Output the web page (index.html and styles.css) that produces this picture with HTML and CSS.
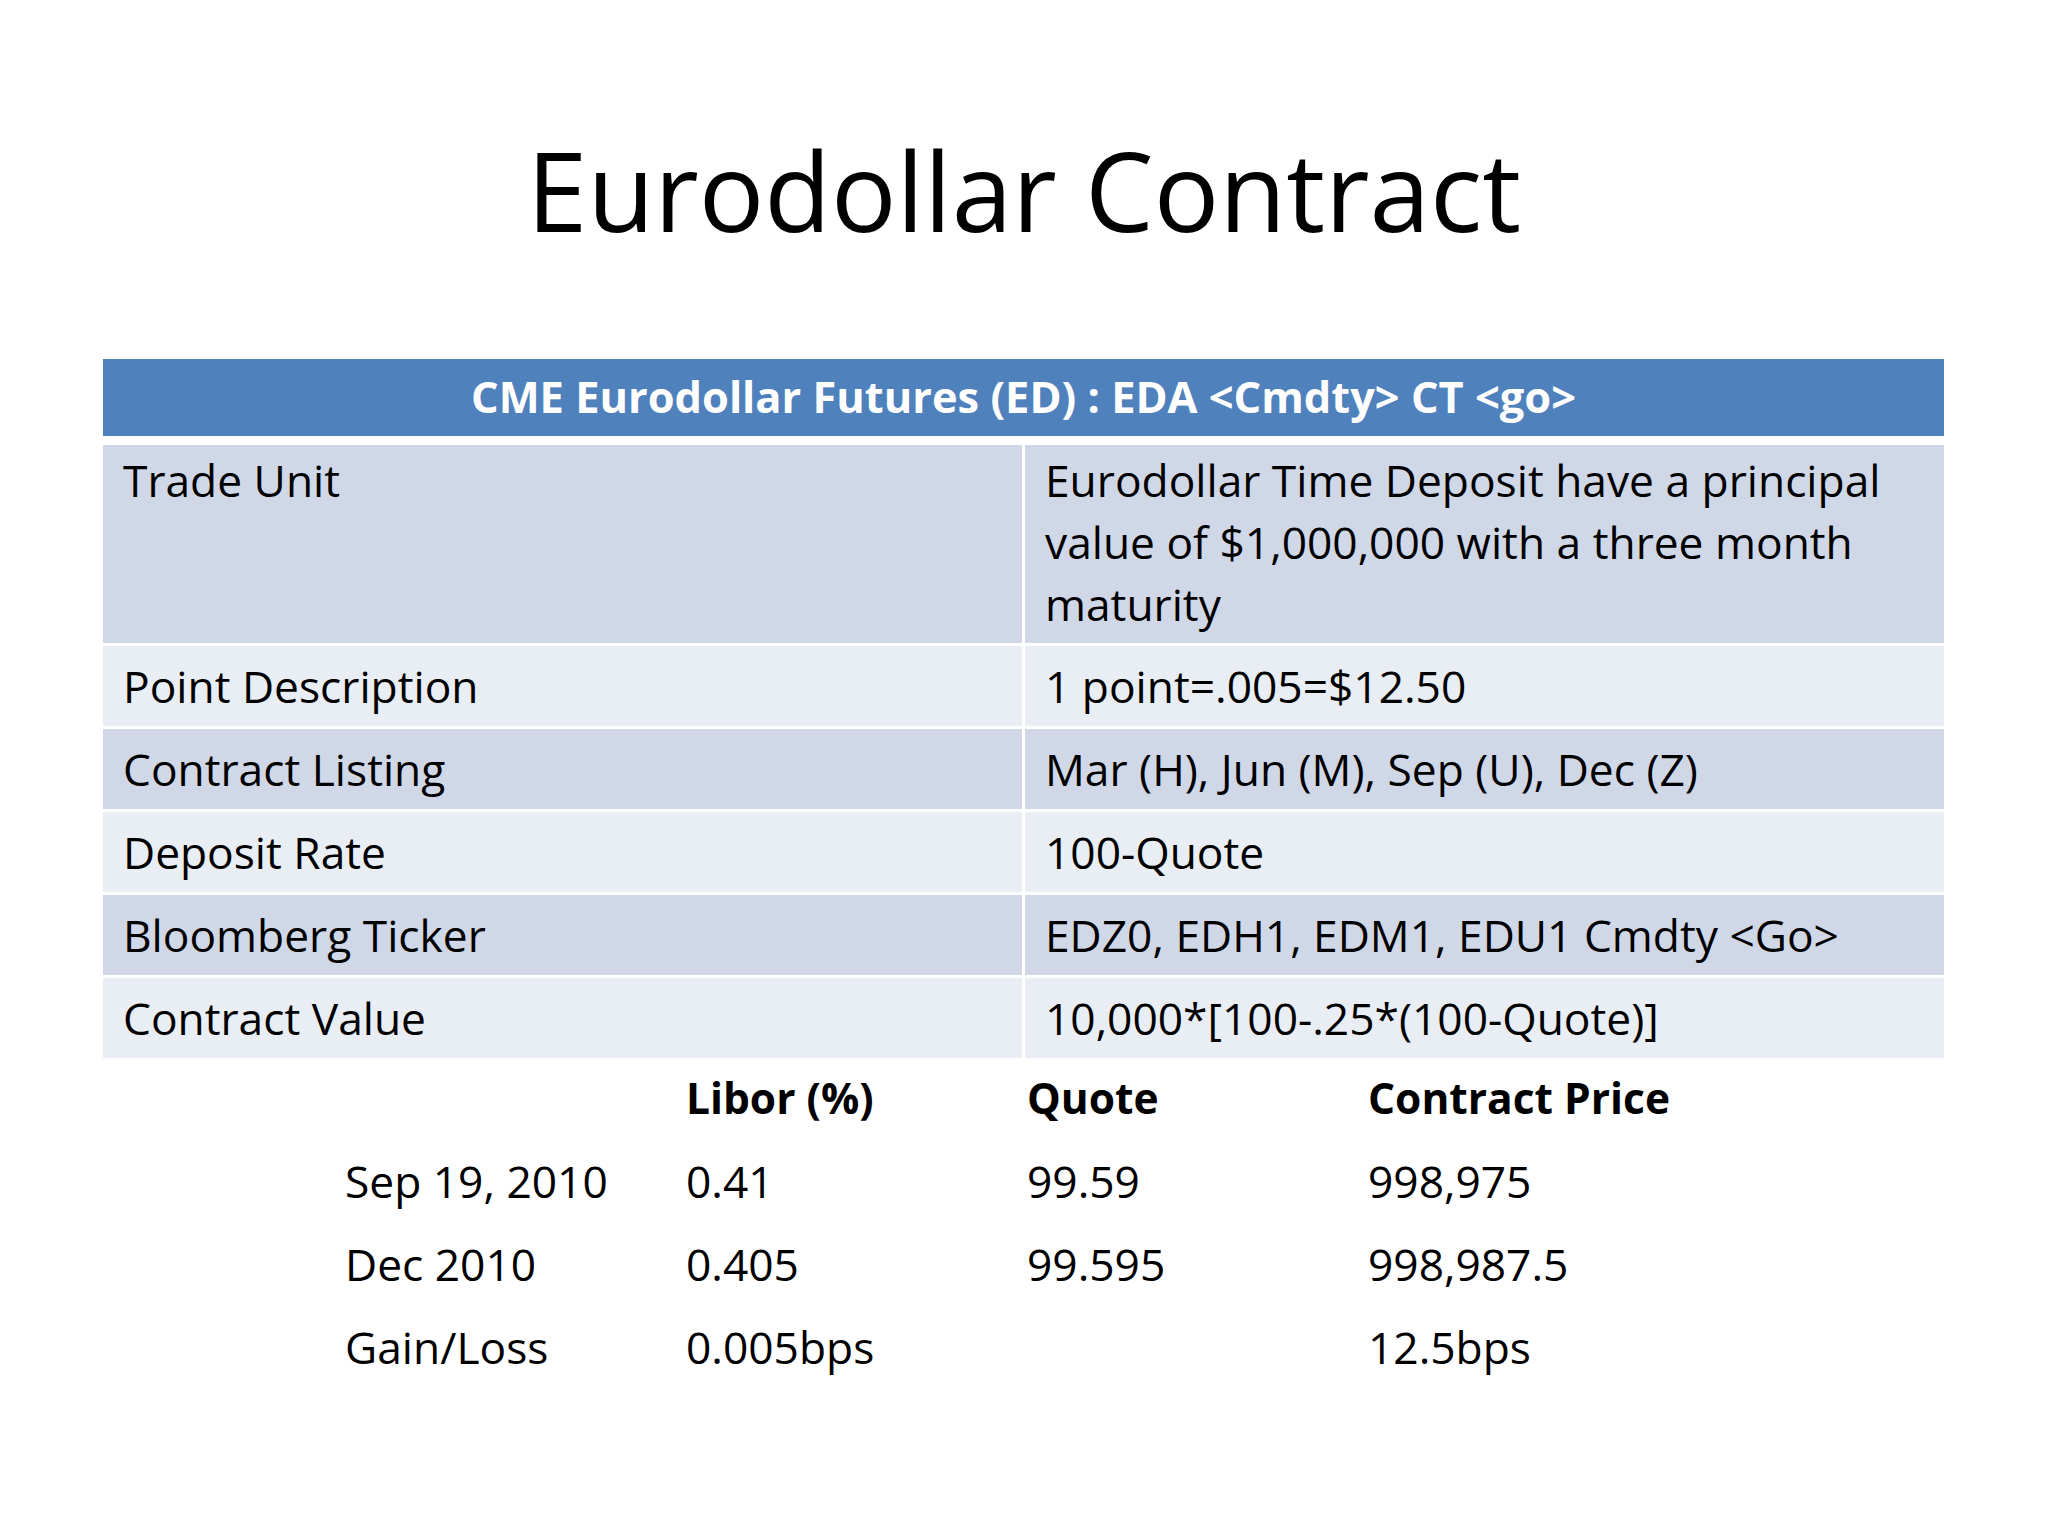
FILE: index.html
```html
<!DOCTYPE html>
<html lang="en">
<head>
<meta charset="utf-8">
<title>Eurodollar Contract</title>
<link rel="stylesheet" href="styles.css">
</head>
<body>
<main class="slide">
  <h1 class="title">Eurodollar Contract</h1>

  <section class="spec">
    <div class="spec-head">CME Eurodollar Futures (ED) : EDA &lt;Cmdty&gt; CT &lt;go&gt;</div>
    <div class="spec-row band-dark first">
      <div class="cell">Trade Unit</div>
      <div class="cell">Eurodollar Time Deposit have a principal<br>value of $1,000,000 with a three month<br>maturity</div>
    </div>
    <div class="spec-row band-light">
      <div class="cell">Point Description</div>
      <div class="cell">1 point=.005=$12.50</div>
    </div>
    <div class="spec-row band-dark">
      <div class="cell">Contract Listing</div>
      <div class="cell">Mar (H), Jun (M), Sep (U), Dec (Z)</div>
    </div>
    <div class="spec-row band-light">
      <div class="cell">Deposit Rate</div>
      <div class="cell">100-Quote</div>
    </div>
    <div class="spec-row band-dark">
      <div class="cell">Bloomberg Ticker</div>
      <div class="cell">EDZ0, EDH1, EDM1, EDU1 Cmdty &lt;Go&gt;</div>
    </div>
    <div class="spec-row band-light">
      <div class="cell">Contract Value</div>
      <div class="cell">10,000*[100-.25*(100-Quote)]</div>
    </div>
  </section>

  <section class="example">
    <div class="ex-cell"></div>
    <div class="ex-cell ex-head">Libor (%)</div>
    <div class="ex-cell ex-head">Quote</div>
    <div class="ex-cell ex-head">Contract Price</div>

    <div class="ex-cell">Sep 19, 2010</div>
    <div class="ex-cell">0.41</div>
    <div class="ex-cell">99.59</div>
    <div class="ex-cell">998,975</div>

    <div class="ex-cell">Dec 2010</div>
    <div class="ex-cell">0.405</div>
    <div class="ex-cell">99.595</div>
    <div class="ex-cell">998,987.5</div>

    <div class="ex-cell">Gain/Loss</div>
    <div class="ex-cell">0.005bps</div>
    <div class="ex-cell"></div>
    <div class="ex-cell">12.5bps</div>
  </section>
</main>
</body>
</html>
```

FILE: styles.css
```css
html, body {
  margin: 0;
  padding: 0;
  background: #ffffff;
}

.slide {
  width: 2048px;
  height: 1536px;
  overflow: hidden;
  background: #ffffff;
  color: #000000;
  font-family: "Open Sans", "DejaVu Sans", sans-serif;
  font-size: 44.3px;
  line-height: 60px;
  display: flex;
  flex-direction: column;
}

.title {
  margin: 125px 0 0 0;
  font-size: 109px;
  line-height: 130px;
  font-weight: 400;
  text-align: center;
  letter-spacing: 0;
}

.spec {
  margin: 104px 104px 0 103px;
  display: flex;
  flex-direction: column;
  gap: 3px;
}

.spec-head {
  background: #4f81bd;
  color: #ffffff;
  font-size: 43.4px;
  font-weight: 700;
  text-align: center;
  padding: 8px 20px 9px;
  margin-bottom: 6px;
}

.spec-row {
  display: grid;
  grid-template-columns: 1fr 1fr;
  column-gap: 3px;
}

.cell {
  padding: 10px 20px;
}

.band-dark .cell {
  background: #d0d8e8;
}

.band-light .cell {
  background: #e9edf4;
}

.spec-row.first .cell {
  padding: 4px 20px 8px;
  line-height: 62px;
}

.example {
  margin: 0 0 0 325px;
  display: grid;
  grid-template-columns: repeat(4, 341px);
  row-gap: 3px;
}

.ex-cell {
  padding: 10px 20px;
  min-height: 60px;
  white-space: nowrap;
}

.ex-head {
  font-size: 42.5px;
  font-weight: 700;
}
```
